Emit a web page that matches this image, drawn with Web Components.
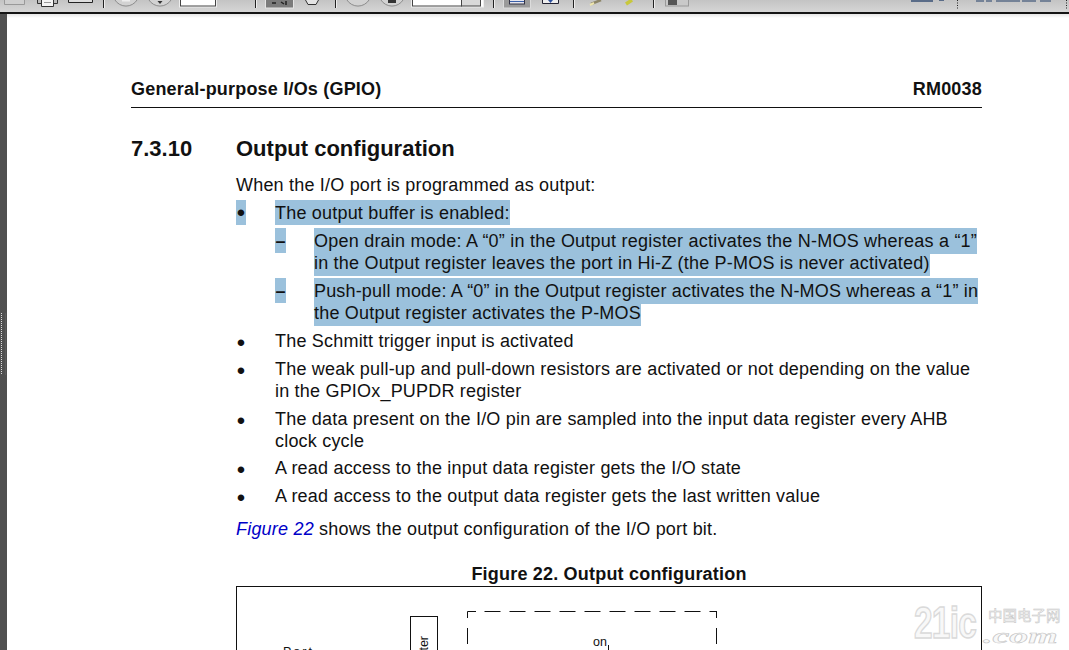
<!DOCTYPE html>
<html>
<head>
<meta charset="utf-8">
<style>
  html, body { margin: 0; padding: 0; height: 650px; overflow: hidden; background: #fff; }
  body { font-family: "Liberation Sans", Arial, sans-serif; color: #111; display: flex; flex-direction: column; }
</style>
</head>
<body>
<pdf-toolbar></pdf-toolbar>
<pdf-viewer>
  <pdf-header left="General-purpose I/Os (GPIO)" right="RM0038"></pdf-header>
  <pdf-section num="7.3.10" title="Output configuration">
    <pdf-para style="--top:12px">When the I/O port is programmed as output:</pdf-para>
    <pdf-item mark="•" selected><sel-line style="--b:1px">The output buffer is enabled:</sel-line></pdf-item>
    <pdf-subitem>
      <sel-line style="letter-spacing:.225px">Open drain mode: A “0” in the Output register activates the N-MOS whereas a “1”</sel-line>
      <sel-line>in the Output register leaves the port in Hi-Z (the P-MOS is never activated)</sel-line>
    </pdf-subitem>
    <pdf-subitem>
      <sel-line style="letter-spacing:.17px">Push-pull mode: A “0” in the Output register activates the N-MOS whereas a “1” in</sel-line>
      <sel-line>the Output register activates the P-MOS</sel-line>
    </pdf-subitem>
    <pdf-item mark="•">The Schmitt trigger input is activated</pdf-item>
    <pdf-item mark="•">The weak pull-up and pull-down resistors are activated or not depending on the value<br>in the GPIOx_PUPDR register</pdf-item>
    <pdf-item mark="•">The data present on the I/O pin are sampled into the input data register every AHB<br>clock cycle</pdf-item>
    <pdf-item mark="•" style="margin-top:5px">A read access to the input data register gets the I/O state</pdf-item>
    <pdf-item mark="•">A read access to the output data register gets the last written value</pdf-item>
    <pdf-para style="--top:11px"><i style="color:#0000c8">Figure 22</i> shows the output configuration of the I/O port bit.</pdf-para>
    <pdf-figure caption="Figure 22. Output configuration"></pdf-figure>
  </pdf-section>
  <site-watermark slot="overlay"></site-watermark>
</pdf-viewer>

<script>
class PdfToolbar extends HTMLElement {
  constructor() {
    super();
    this.attachShadow({ mode: "open" }).innerHTML = `
      <style>
        :host { display: block; height: 12px; flex: none; overflow: hidden;
          background: linear-gradient(#c4c4c4, #d6d6d6); border-bottom: 2px solid #141414; }
        svg { display: block; }
      </style>
      <svg width="1069" height="12" fill="none" stroke="#333">
        <!-- file group -->
        <path d="M4.500 0V4.500H24.500V0" fill="#cfcfcf" stroke="#999"/>
        <path d="M37.500 0V3.500H57.500V0" fill="#bbb"/>
        <path d="M41.500 0V6.500H53.500V0" fill="#f4f4f4"/>
        <path d="M44 2.500H51" stroke="#999"/>
        <path d="M68.500 0V2.500H92.500V0" fill="#ddd" stroke="#222"/>
        <!-- separators -->
        <path d="M103.500 0V8M255.500 0V8M335.500 0V8M493.500 0V8M573.500 0V8M653.500 0V8" stroke="#222"/>
        <path d="M104.500 0V8M256.500 0V8M336.500 0V8M494.500 0V8M574.500 0V8M654.500 0V8" stroke="#eee"/>
        <!-- round buttons, cut by the top edge -->
        <path d="M115 0A13 13 0 0 0 137 0M149 0A13 13 0 0 0 171 0M347 0A13 13 0 0 0 369 0M381 0A13 13 0 0 0 403 0" stroke="#8c8c8c" fill="#d2d2d2"/>
        <path d="M122 .500H130" stroke="#eee" stroke-width="2"/>
        <path d="M157.500 1L160 4L162.500 1Z" fill="#333" stroke="none"/>
        <rect x="388" y="0" width="8" height="3" fill="#333" stroke="none"/>
        <!-- page field -->
        <rect x="179.500" y="-3" width="37" height="10" fill="#fff" stroke="#eee"/>
        <rect x="180.500" y="-3" width="35" height="9" fill="#fff" stroke="#444"/>
        <!-- selected tool -->
        <rect x="265.500" y="-3" width="28" height="11" fill="#7b7b7b" stroke="#e4e4e4"/>
        <path d="M272 3H276M281 2L284 4M286 1V5" stroke="#222" stroke-width="1.500"/>
        <path d="M305.500 0L308 4.500H316L318.500 0" fill="#e4e4e4" stroke="#333"/>
        <!-- zoom field -->
        <rect x="411.500" y="-3" width="72" height="10" fill="#fff" stroke="#eee"/>
        <rect x="412.500" y="-3" width="49" height="9" fill="#fff" stroke="#444"/>
        <rect x="461.500" y="-3" width="19" height="9" fill="#d8d8d8" stroke="#444"/>
        <!-- fit buttons -->
        <rect x="503.500" y="-3" width="27" height="11" fill="#9a9a9a" stroke="#dcdcdc"/>
        <rect x="509.500" y="-3" width="15" height="7" fill="#e6e6ee" stroke="#334"/>
        <path d="M510 1.500H524" stroke="#3a5fa8"/>
        <path d="M542.500 0V3.500H558.500V0" fill="#eee" stroke="#223"/>
        <path d="M548 0H553L550.500 3Z" fill="#2b4f9e" stroke="none"/>
        <!-- comment tools -->
        <path d="M591 4L601 0" stroke="#8d8668" stroke-width="2.500"/>
        <path d="M590 5L594 3" stroke="#eee6b0" stroke-width="2"/>
        <path d="M626 4L632 0" stroke="#c8c83c" stroke-width="3.500"/>
        <rect x="665.500" y="-3" width="23" height="9" fill="#c9c9c9" stroke="#999"/>
        <rect x="668" y="0" width="9" height="5" fill="#555" stroke="none"/>
        <!-- right side -->
        <path d="M911 1H933" stroke="#5a6c88" stroke-width="2"/>
        <path d="M939 .500H944" stroke="#5a6c88"/>
        <path d="M957.500 0V9M1066.500 0V9" stroke="#222" stroke-dasharray="1 1.500"/>
        <path d="M976 1H984M986 1H992M996 1H1020M1022 1H1036M1040 1H1051" stroke="#5a6c88" stroke-width="1.500"/>
      </svg>`;
  }
}

class PdfViewer extends HTMLElement {
  constructor() {
    super();
    this.attachShadow({ mode: "open" }).innerHTML = `
      <style>
        :host { display: flex; flex: 1; min-height: 0; position: relative; overflow: hidden; }
        .rail { flex: none; width: 7px; background: #505050; position: relative; }
        .rail::after { content: ""; position: absolute; left: 1px; top: 299px; width: 1px; height: 62px;
          background: repeating-linear-gradient(#ddd 0 1px, transparent 1px 2px); box-shadow: 4px 0 #5c5c5c; }
        .page { flex: 1; padding: 60px 87px 0 124px; min-width: 0;
          background: linear-gradient(#e6e6e6, #fff 4px); }
      </style>
      <div class="rail"></div>
      <div class="page"><slot></slot></div>
      <slot name="overlay"></slot>`;
  }
}

class PdfHeader extends HTMLElement {
  constructor() {
    super();
    this.attachShadow({ mode: "open" }).innerHTML = `
      <style>
        :host { display: flex; justify-content: space-between; font-weight: bold; font-size: 18px; letter-spacing: .2px;
          line-height: 31px; border-bottom: 1px solid #111; box-sizing: border-box; height: 34px; margin-bottom: -1px; }
      </style>
      <span>${this.getAttribute("left")}</span><span>${this.getAttribute("right")}</span>`;
  }
}

class PdfSection extends HTMLElement {
  constructor() {
    super();
    this.attachShadow({ mode: "open" }).innerHTML = `
      <style>
        :host { display: block; padding-top: 29px; }
        .head { display: grid; grid-template-columns: 105px 1fr; font-weight: bold; font-size: 22px; line-height: 26px; }
        .body { margin-left: 105px; }
      </style>
      <div class="head"><span>${this.getAttribute("num")}</span><span>${this.getAttribute("title")}</span></div>
      <div class="body"><slot></slot></div>`;
  }
}

class PdfPara extends HTMLElement {
  constructor() {
    super();
    this.attachShadow({ mode: "open" }).innerHTML = `
      <style>
        :host { display: block; font-size: 18px; letter-spacing: .2px; line-height: 22px; margin-top: var(--top, 0); }
      </style>
      <slot></slot>`;
  }
}

class SelLine extends HTMLElement {
  constructor() {
    super();
    this.attachShadow({ mode: "open" }).innerHTML = `
      <style>
        :host { display: block; width: max-content; background: #9bc1dc; white-space: nowrap;
          box-shadow: 0 calc(var(--t, 2px) * -1) #9bc1dc, 0 var(--b, 2px) #9bc1dc; }
      </style>
      <slot></slot>`;
  }
}

class PdfItem extends HTMLElement {
  constructor() {
    super();
    const sel = this.hasAttribute("selected");
    this.attachShadow({ mode: "open" }).innerHTML = `
      <style>
        :host { display: grid; grid-template-columns: 39px 1fr; font-size: 18px; letter-spacing: .2px; line-height: 22px; margin-top: 6px; white-space: nowrap; }
        .m { width: 10px; height: 22px; position: relative; }
        .m b { position: absolute; left: -1px; width: 12px; top: ${sel ? "-2px" : "0"}; height: ${sel ? "25px" : "22px"};
          text-align: center; font: 24px/26px "Liberation Sans", sans-serif;
          ${sel ? "background:#9bc1dc;left:0;width:10px;" : ""} }
      </style>
      <span class="m"><b>${this.getAttribute("mark")}</b></span><div><slot></slot></div>`;
  }
}

class PdfSubitem extends HTMLElement {
  constructor() {
    super();
    this.attachShadow({ mode: "open" }).innerHTML = `
      <style>
        :host { display: grid; grid-template-columns: 39px 1fr; font-size: 18px; letter-spacing: .2px; line-height: 22px; margin: 6px 0 0 39px; }
        .m { width: 11px; height: 25px; margin-top: -2px; background: #9bc1dc; line-height: 26px; font-weight: bold; text-align: center; }
      </style>
      <span class="m">–</span><div><slot></slot></div>`;
  }
}

class PdfFigure extends HTMLElement {
  constructor() {
    super();
    this.attachShadow({ mode: "open" }).innerHTML = `
      <style>
        :host { display: block; margin-top: 23px; }
        .cap { font-weight: bold; font-size: 18px; letter-spacing: .2px; line-height: 22px; text-align: center; height: 23px; }
        .box { position: relative; height: 64px; border-top: 1px solid #111; border-left: 1px solid #111; border-right: 1px solid #111; font-size: 12.500px; }
        .bar { position: absolute; left: 173px; top: 29px; width: 28px; height: 40px; border: 1px solid #111; box-sizing: border-box; }
        .bar span { position: absolute; left: 6px; top: 19px; writing-mode: vertical-rl; transform: rotate(180deg); white-space: nowrap; line-height: 14px; }
        .dash { position: absolute; left: 230px; top: 24px; }
        .port { position: absolute; left: 46px; top: 58px; letter-spacing: 2px; }
        .on { position: absolute; left: 356px; top: 48px; line-height: 14px; }
        .tick { position: absolute; left: 371px; top: 58px; width: 1px; height: 8px; background: #111; }
      </style>
      <div class="cap">${this.getAttribute("caption")}</div>
      <div class="box">
        <span class="port">Port</span>
        <div class="bar"><span>ter</span></div>
        <svg class="dash" width="250" height="50" fill="none" stroke="#111">
          <path d="M.5 7V.5H9"/>
          <path d="M17.500 .5H249.500" stroke-dasharray="16 9"/>
          <path d="M249.500 0V7"/>
          <path d="M.5 17V33M.5 41V50M249.500 17V33M249.500 41V50"/>
        </svg>
        <span class="on">on</span>
        <i class="tick"></i>
      </div>`;
  }
}

class SiteWatermark extends HTMLElement {
  constructor() {
    super();
    this.attachShadow({ mode: "open" }).innerHTML = `
      <style>
        :host { position: absolute; left: 914px; top: 592px; width: 150px; height: 40px; display: block; pointer-events: none; }
        span { position: absolute; color: #f8f8f8; white-space: nowrap; }
        .n { left: 0; top: -2px; font: bold 44px/38px "Liberation Sans", sans-serif; -webkit-text-stroke: 1.500px #dadada;
          transform: scaleX(.76); transform-origin: 0 0; letter-spacing: -1px; }
        .cn { left: 74px; top: 1px; font: 14.500px/16px "Noto Sans CJK SC", sans-serif; -webkit-text-stroke: .5px #c4c4c4; }
        .com { left: 69px; top: 21px; font: italic bold 21px/18px "Liberation Serif", serif; -webkit-text-stroke: .5px #c4c4c4;
          transform: scaleX(1.8); transform-origin: 0 0; }
      </style>
      <span class="n">21ic</span><span class="cn">中国电子网</span><span class="com">.com</span>`;
  }
}

customElements.define("pdf-toolbar", PdfToolbar);
customElements.define("pdf-viewer", PdfViewer);
customElements.define("pdf-header", PdfHeader);
customElements.define("pdf-section", PdfSection);
customElements.define("pdf-para", PdfPara);
customElements.define("sel-line", SelLine);
customElements.define("pdf-item", PdfItem);
customElements.define("pdf-subitem", PdfSubitem);
customElements.define("pdf-figure", PdfFigure);
customElements.define("site-watermark", SiteWatermark);
</script>
</body>
</html>
